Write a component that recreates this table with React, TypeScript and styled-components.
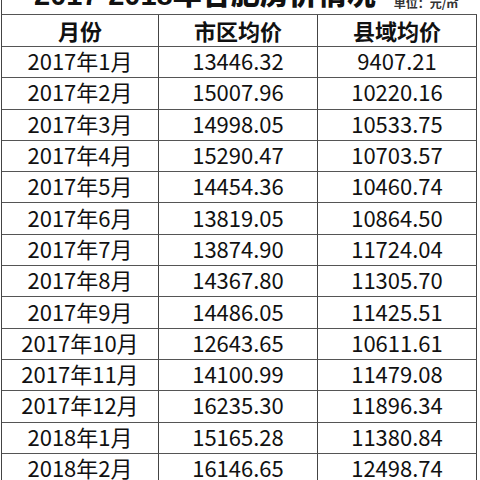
import React from "react";
import styled, { createGlobalStyle } from "styled-components";

const GlobalStyle = createGlobalStyle`
    html, body {
        margin: 0;
        padding: 0;
        background: #ffffff;
        overflow: hidden;
    }
`;

const Page = styled.div`
    width: 480px;
    height: 480px;
    overflow: hidden;
    background: #fff;
    font-family: "Noto Sans CJK SC", "Noto Sans", sans-serif;
    color: #111;
`;

const Sheet = styled.div`
    margin-top: -30px; /* title row is cut at the top of the shot */
    margin-left: 1px;
    width: 476px;
`;

const TitleRow = styled.div`
    height: 44px;
    display: flex;
    align-items: flex-end;
    padding-left: 32px;
    box-sizing: border-box;
    border-left: 1px solid #444;
    white-space: nowrap;
`;

const Title = styled.span`
    font-family: "Liberation Sans", "Noto Sans CJK SC", sans-serif;
    font-size: 29px;
    font-weight: 900;
    line-height: 1;
    margin-bottom: 4px;
    flex-shrink: 0;
`;

const Unit = styled.span`
    font-size: 12px;
    font-weight: 700;
    color: #333;
    margin-left: 18px;
    margin-bottom: 5px;
    line-height: 1;
    flex-shrink: 0;
`;

const Grid = styled.div`
    display: grid;
    grid-template-columns: 157px 159px 159px;
    border-left: 1px solid #444;
    border-top: 1px solid #555;
`;

const Cell = styled.div<{ $head?: boolean }>`
    height: ${(p) => (p.$head ? 32 : 31.3)}px;
    box-sizing: border-box;
    border-right: 1px solid #444;
    border-bottom: 1px solid #555;
    display: flex;
    align-items: center;
    justify-content: center;
    padding-bottom: ${(p) => (p.$head ? 2 : 4)}px;
    font-size: 22px;
    font-weight: ${(p) => (p.$head ? 700 : 400)};
    line-height: 1;
`;

const rows: [string, string, string][] = [
    ["2017年1月", "13446.32", "9407.21"],
    ["2017年2月", "15007.96", "10220.16"],
    ["2017年3月", "14998.05", "10533.75"],
    ["2017年4月", "15290.47", "10703.57"],
    ["2017年5月", "14454.36", "10460.74"],
    ["2017年6月", "13819.05", "10864.50"],
    ["2017年7月", "13874.90", "11724.04"],
    ["2017年8月", "14367.80", "11305.70"],
    ["2017年9月", "14486.05", "11425.51"],
    ["2017年10月", "12643.65", "10611.61"],
    ["2017年11月", "14100.99", "11479.08"],
    ["2017年12月", "16235.30", "11896.34"],
    ["2018年1月", "15165.28", "11380.84"],
    ["2018年2月", "16146.65", "12498.74"],
];

export default function App() {
    return (
        <Page>
            <GlobalStyle />
            <Sheet>
                <TitleRow>
                    <Title>2017-2018年合肥房价情况</Title>
                    <Unit>单位：元/㎡</Unit>
                </TitleRow>
                <Grid>
                    <Cell $head>月份</Cell>
                    <Cell $head>市区均价</Cell>
                    <Cell $head>县域均价</Cell>
                    {rows.map((r) => (
                        <React.Fragment key={r[0]}>
                            <Cell>{r[0]}</Cell>
                            <Cell>{r[1]}</Cell>
                            <Cell>{r[2]}</Cell>
                        </React.Fragment>
                    ))}
                </Grid>
            </Sheet>
        </Page>
    );
}
